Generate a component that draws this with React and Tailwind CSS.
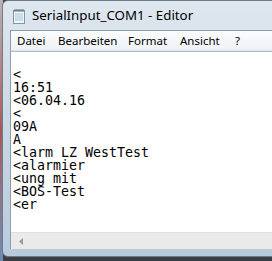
export default function App() {
  const lines = [
    "<",
    "16:51",
    "<06.04.16",
    "<",
    "09A",
    "A",
    "<larm LZ WestTest",
    "<alarmier",
    "<ung mit",
    "<BOS-Test",
    "<er",
  ];
  return (
    <div className="relative w-[272px] h-[261px] overflow-hidden bg-[#3a3f45]">
      {/* desktop strip on left */}
      <div className="absolute left-0 top-0 w-[3px] h-full bg-gradient-to-b from-[#b9b3b3] via-[#a5585b] to-[#6c8bb0]" />
      {/* window */}
      <div className="absolute left-[2px] top-0 w-[290px] h-[257px] rounded-[6px] bg-gradient-to-b from-[#dfe7ef] via-[#c9d6e3] to-[#b8cbdd] border border-[#6d7b8a] flex flex-col">
        {/* title bar */}
        <div className="h-[29px] flex items-center pl-[9px] gap-[6px] shrink-0">
          <svg width="14" height="16" viewBox="0 0 14 16">
            <rect x="1.5" y="2.5" width="11" height="13" fill="#eef6fb" stroke="#7c97ae" />
            <line x1="3" y1="6" x2="11" y2="6" stroke="#a8c0d3" />
            <line x1="3" y1="8" x2="11" y2="8" stroke="#a8c0d3" />
            <line x1="3" y1="10" x2="11" y2="10" stroke="#a8c0d3" />
            <line x1="3" y1="12" x2="11" y2="12" stroke="#a8c0d3" />
            <path d="M3 1v3M5 1v3M7 1v3M9 1v3M11 1v3" stroke="#5f6d7a" strokeWidth="1" />
          </svg>
          <span className="text-[13.3px] text-black font-['Noto_Sans',sans-serif] leading-none pt-[1px]">
            SerialInput_COM1 - Editor
          </span>
        </div>
        {/* client */}
        <div className="ml-[7px] flex flex-col flex-1 bg-white border-t border-l border-[#8e9eae]">
          {/* menu */}
          <div className="h-[20px] flex items-center bg-gradient-to-b from-[#fbfcfd] to-[#eef2f6] border-b border-[#dce3ea] text-[11.5px] font-['Noto_Sans',sans-serif] text-black shrink-0 whitespace-nowrap">
            <span className="ml-[6px] w-[41px]">Datei</span>
            <span className="w-[70px]">Bearbeiten</span>
            <span className="w-[52px]">Format</span>
            <span className="w-[55px]">Ansicht</span>
            <span>?</span>
          </div>
          {/* text area */}
          <div className="flex-1 border-t border-[#b5bcc4] bg-white pt-[16px] pl-[2px] font-['DejaVu_Sans_Mono',monospace] text-[13.3px] leading-[13px] text-black whitespace-pre">
            {lines.map((l, i) => (
              <div key={i}>{l}</div>
            ))}
          </div>
          {/* h scrollbar */}
          <div className="h-[17px] bg-[#eaeaea] border-t border-[#e0e0e0] flex items-center pl-[8px] shrink-0">
            <svg width="5" height="7" viewBox="0 0 5 7">
              <path d="M4 0L0 3.5L4 7Z" fill="#9a9a9a" />
            </svg>
          </div>
        </div>
        <div className="h-[7px] shrink-0" />
      </div>
    </div>
  );
}
